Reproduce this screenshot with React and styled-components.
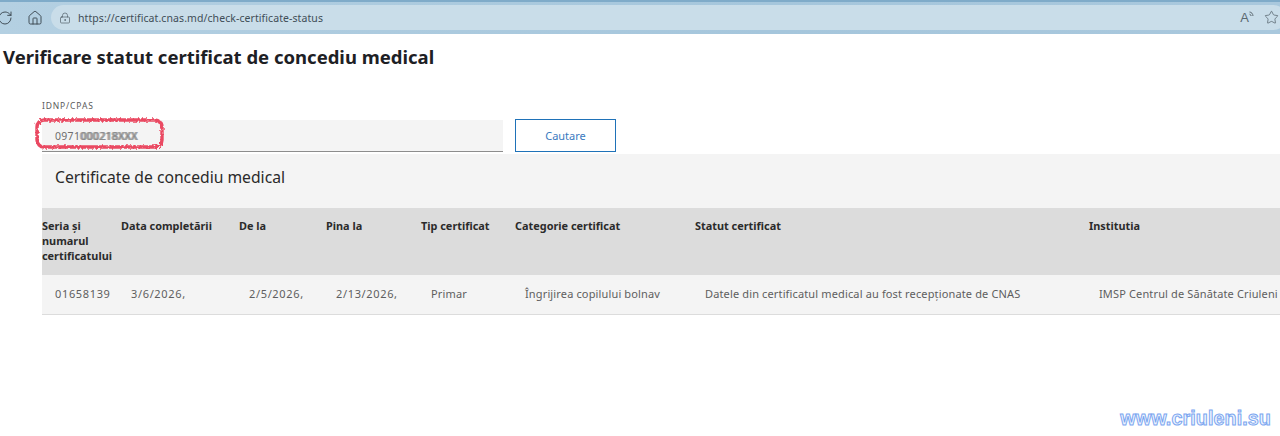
import styled, { createGlobalStyle } from "styled-components";
import { RotateCw, Home, LockKeyhole, Star } from "lucide-react";

const GlobalStyle = createGlobalStyle`
  html, body {
    margin: 0;
    padding: 0;
    background: #fff;
    overflow: hidden;
  }
  body {
    font-family: "Noto Sans", "Liberation Sans", sans-serif;
    color: #161616;
  }
`;

const Page = styled.div`
  position: relative;
  width: 1280px;
  height: 436px;
  overflow: hidden;
`;

const BrowserBar = styled.div`
  height: 34px;
  box-sizing: border-box;
  border-top: 2px solid #7fabc9;
  background: linear-gradient(90deg, #b4d0e2 0%, #a5c6dc 60%, #a9c8dd 100%);
  display: flex;
  align-items: center;
  padding-bottom: 1px;
`;

const NavIcons = styled.div`
  width: 54px;
  flex-shrink: 0;
  display: flex;
  align-items: center;
  gap: 14px;
  margin-left: -3px;
  color: #39454d;
`;

const AddressBar = styled.div`
  flex: 1;
  height: 25px;
  margin-right: -6px;
  border-radius: 13px;
  background: #c9dde9;
  display: flex;
  align-items: center;
  padding: 0 7px 0 8px;
  gap: 7px;
  color: #4a5760;
`;

const Url = styled.span`
  flex: 1;
  font-size: 10.5px;
  color: #3f4d57;
  letter-spacing: 0.08px;
`;

const ReadAloud = styled.span`
  display: flex;
  align-items: flex-start;
  font-size: 13px;
  line-height: 14px;
  color: #5b6870;
  margin-right: 3px;
  font-family: "Liberation Sans", sans-serif;
`;

const Content = styled.main`
  display: flex;
  flex-direction: column;
`;

const Heading = styled.h1`
  margin: 12px 0 0 3px;
  font-size: 18.5px;
  line-height: 22px;
  font-weight: 700;
  color: #1d2024;
  white-space: nowrap;
`;

const Section = styled.section`
  margin: 32px 0 0 42px;
  width: 1300px;
`;

const FieldLabel = styled.label`
  display: block;
  font-size: 8.5px;
  line-height: 11px;
  letter-spacing: 0.85px;
  color: #5a5a5a;
`;

const SearchRow = styled.div`
  position: relative;
  display: flex;
  gap: 12px;
  margin-top: 8px;
`;

const Field = styled.div`
  width: 461px;
  height: 32px;
  margin-top: 1px;
  box-sizing: border-box;
  background: #f4f4f4;
  border-bottom: 1px solid #8d8d8d;
  display: flex;
  align-items: center;
  padding-left: 13px;
  font-size: 10.5px;
  letter-spacing: 0.3px;
  color: #6d6d6d;
`;

const Smeared = styled.span`
  color: #8a8a8a;
  text-shadow: 1px 0 0 #9a9a9a, -1px 0 0 #b0b0b0;
`;

const SearchButton = styled.button`
  width: 101px;
  height: 33px;
  box-sizing: border-box;
  background: #fff;
  border: 1px solid #1f72b8;
  font-family: inherit;
  font-size: 11px;
  color: #3a7ac0;
  padding: 0;
`;

const Scribble = styled.svg`
  position: absolute;
  left: -8px;
  top: -3px;
`;

const TablePanel = styled.div`
  margin-top: 2px;
  background: #f4f4f4;
`;

const TableTitle = styled.h2`
  margin: 0;
  height: 54px;
  box-sizing: border-box;
  padding: 0 0 8px 13px;
  display: flex;
  align-items: center;
  font-size: 15.7px;
  font-weight: 400;
  color: #2a2a2a;
`;

const Row = styled.div`
  display: grid;
  grid-template-columns: 79px 118px 87px 95px 94px 180px 394px 253px;
`;

const HeaderRow = styled(Row)`
  height: 67px;
  background: #dcdcdc;
`;

const HeaderCell = styled.div`
  padding-top: 10px;
  font-size: 10.9px;
  line-height: 15px;
  font-weight: 700;
  color: #2b2b2b;
`;

const BodyRow = styled(Row)`
  height: 40px;
  box-sizing: border-box;
  padding-bottom: 2px;
  border-bottom: 1px solid #dcdcdc;
`;

const BodyCell = styled.div`
  padding-left: ${(p) => (p.$first ? 13 : 10)}px;
  display: flex;
  align-items: center;
  font-size: 11px;
  letter-spacing: ${(p) => (p.$numeric ? 0.65 : 0.14)}px;
  color: #5e5e5e;
  white-space: nowrap;
`;

const Watermark = styled.div`
  position: absolute;
  right: 9px;
  bottom: 6px;
  font-family: "Liberation Sans", sans-serif;
  font-size: 19.7px;
  font-weight: 700;
  letter-spacing: 0.1px;
  color: #eef4fe;
  -webkit-text-stroke: 1px #7ba6f0;
`;

const columns = [
  "Seria și numarul certificatului",
  "Data completării",
  "De la",
  "Pina la",
  "Tip certificat",
  "Categorie certificat",
  "Statut certificat",
  "Institutia",
];

const values = [
  "01658139",
  "3/6/2026,",
  "2/5/2026,",
  "2/13/2026,",
  "Primar",
  "Îngrijirea copilului bolnav",
  "Datele din certificatul medical au fost recepționate de CNAS",
  "IMSP Centrul de Sănătate Criuleni",
];

const App = () => {
  return (
    <Page>
      <GlobalStyle />
      <BrowserBar>
        <NavIcons>
          <RotateCw size={16} strokeWidth={1.4} />
          <Home size={16} strokeWidth={1.4} />
        </NavIcons>
        <AddressBar>
          <LockKeyhole size={12} strokeWidth={1.3} />
          <Url>https://certificat.cnas.md/check-certificate-status</Url>
          <ReadAloud>
            A
            <svg width="5" height="7" viewBox="0 0 5 7" fill="none" stroke="currentColor">
              <path d="M0.5 1 C2.5 1.2 3.8 2.6 4 5" />
              <path d="M0.5 3.2 C1.5 3.4 2 4 2.2 5" />
            </svg>
          </ReadAloud>
          <Star size={15} strokeWidth={1.1} />
        </AddressBar>
      </BrowserBar>
      <Content>
        <Heading>Verificare statut certificat de concediu medical</Heading>
        <Section>
          <FieldLabel>IDNP/CPAS</FieldLabel>
          <SearchRow>
            <Field>
              0971<Smeared>000218XXX</Smeared>
            </Field>
            <SearchButton>Cautare</SearchButton>
            <Scribble width="132" height="36" viewBox="0 0 132 36" fill="none">
              <filter id="rough" x="-5%" y="-20%" width="110%" height="140%">
                <feTurbulence type="fractalNoise" baseFrequency="0.5" numOctaves="2" seed="4" />
                <feDisplacementMap in="SourceGraphic" scale="4" />
              </filter>
              <rect
                x="3"
                y="4"
                width="125"
                height="27"
                rx="7"
                stroke="#ea4a62"
                strokeWidth="3.4"
                filter="url(#rough)"
              />
            </Scribble>
          </SearchRow>
          <TablePanel>
            <TableTitle>Certificate de concediu medical</TableTitle>
            <HeaderRow>
              {columns.map((c) => (
                <HeaderCell key={c}>{c}</HeaderCell>
              ))}
            </HeaderRow>
            <BodyRow>
              {values.map((v, i) => (
                <BodyCell key={v} $first={i === 0} $numeric={i < 4}>
                  {v}
                </BodyCell>
              ))}
            </BodyRow>
          </TablePanel>
        </Section>
      </Content>
      <Watermark>www.criuleni.su</Watermark>
    </Page>
  );
};

export default App;
